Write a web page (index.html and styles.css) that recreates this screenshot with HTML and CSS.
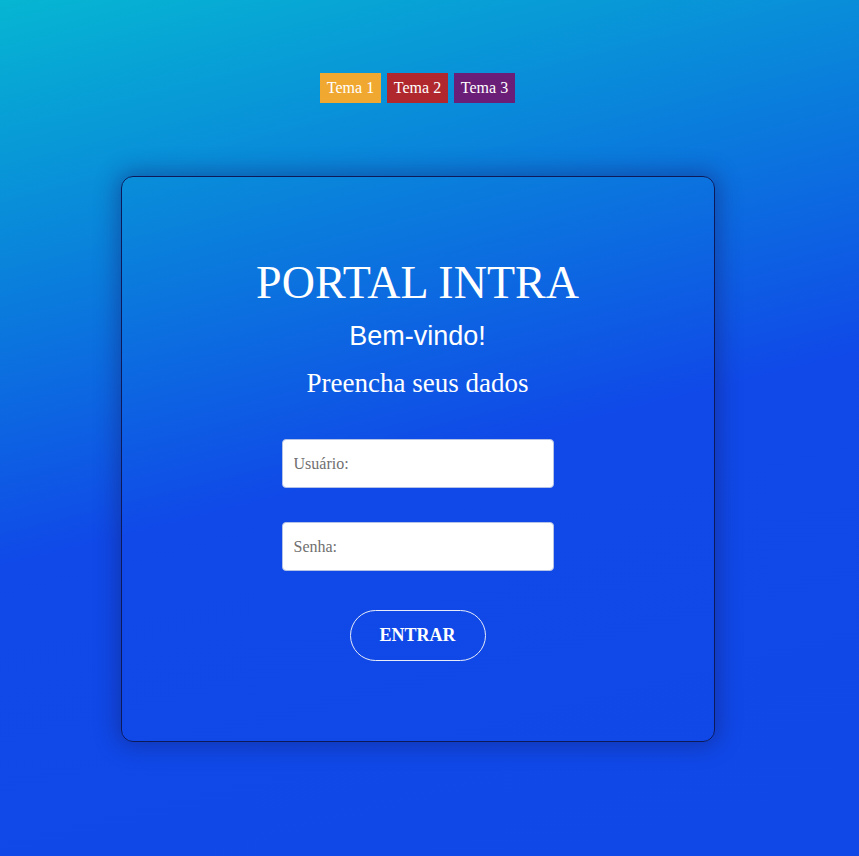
FILE: index.html
```html
<!DOCTYPE html>
<html lang="pt-BR">
<head>
<meta charset="utf-8">
<title>Portal Intra</title>
<link rel="stylesheet" href="styles.css">
</head>
<body>
<div class="page">
  <div class="themes">
    <button class="theme theme-1">Tema 1</button>
    <button class="theme theme-2">Tema 2</button>
    <button class="theme theme-3">Tema 3</button>
  </div>
  <div class="card">
    <h1 class="title">PORTAL INTRA</h1>
    <h2 class="welcome">Bem-vindo!</h2>
    <h3 class="subtitle">Preencha seus dados</h3>
    <form class="form">
      <input class="field" type="text" placeholder="Usuário:">
      <input class="field" type="password" placeholder="Senha:">
      <button class="submit" type="button">ENTRAR</button>
    </form>
  </div>
</div>
</body>
</html>
```

FILE: styles.css
```css
html, body {
  margin: 0;
  padding: 0;
  height: 100%;
}
body {
  background: linear-gradient(166deg, #06b6d2 0%, #0a7ddc 28%, #1049e8 53%, #1048e8 100%);
  font-family: "Liberation Serif", "Times New Roman", serif;
  color: #fff;
}
.page {
  width: 835px;
  display: flex;
  flex-direction: column;
  align-items: center;
  padding-top: 73px;
}
.themes {
  display: flex;
  gap: 6px;
}
.theme {
  border: none;
  width: 61px;
  height: 30px;
  padding: 0;
  font-family: "Liberation Serif", "Times New Roman", serif;
  font-size: 16px;
  color: #fff;
  cursor: pointer;
}
.theme-1 { background: #f0a830; }
.theme-2 { background: #b0282e; }
.theme-3 { background: #6b1e78; }
.card {
  margin-top: 73px;
  width: 592px;
  height: 564px;
  border: 1px solid #0c1a5a;
  border-radius: 12px;
  box-shadow: 0 0 22px 4px rgba(20, 30, 110, 0.45);
  display: flex;
  flex-direction: column;
  align-items: center;
  box-sizing: content-box;
}
.title {
  margin: 79px 0 0;
  font-weight: normal;
  font-size: 46px;
  line-height: 54px;
}
.welcome {
  margin: 10px 0 0;
  font-family: "Liberation Sans", Arial, sans-serif;
  font-weight: normal;
  font-size: 27px;
  line-height: 32px;
}
.subtitle {
  margin: 15px 0 0;
  font-weight: normal;
  font-size: 27px;
  line-height: 32px;
}
.form {
  margin-top: 40px;
  display: flex;
  flex-direction: column;
  align-items: center;
}
.field {
  width: 272px;
  height: 49px;
  box-sizing: border-box;
  border: 1px solid #b4c2e6;
  border-radius: 4px;
  padding: 0 11px;
  font-family: "Liberation Serif", "Times New Roman", serif;
  font-size: 16px;
  color: #333;
  background: #fff;
  outline: none;
}
.field + .field {
  margin-top: 34px;
}
.field::placeholder {
  color: #6f6f6f;
}
.submit {
  margin-top: 39px;
  width: 136px;
  height: 51px;
  border: 1px solid #e8ecf8;
  border-radius: 26px;
  background: transparent;
  color: #fff;
  font-family: "Liberation Serif", "Times New Roman", serif;
  font-weight: bold;
  font-size: 18px;
  cursor: pointer;
}
```
